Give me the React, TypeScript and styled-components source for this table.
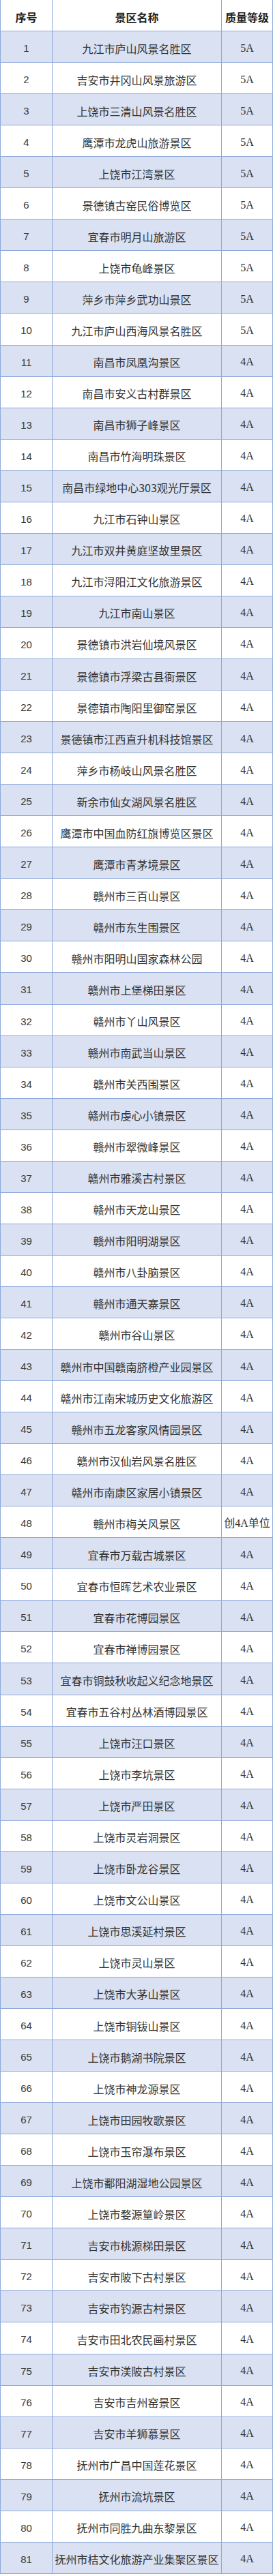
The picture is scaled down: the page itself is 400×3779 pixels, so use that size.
import React from "react";
import styled, { createGlobalStyle } from "styled-components";

const Global = createGlobalStyle`
  html, body { margin: 0; padding: 0; background: #ffffff; }
  body { font-family: "Noto Sans CJK SC", sans-serif; color: #333; }
`;

const LINE = "#8ea9db";

const Table = styled.div`
  width: 400px;
  display: flex;
  flex-direction: column;
`;

const Row = styled.div<{ $shaded?: boolean }>`
  display: grid;
  grid-template-columns: 76px 248px 76px;
  height: 46.06px;
  box-sizing: border-box;
  border-bottom: 1px solid ${LINE};
  background: ${(p) => (p.$shaded ? "#d9e1f2" : "#ffffff")};
`;

const Cell = styled.div<{ $last?: boolean }>`
  display: flex;
  align-items: center;
  justify-content: center;
  box-sizing: border-box;
  border-left: 1px solid ${LINE};
  ${(p) => (p.$last ? `border-right: 1px solid ${LINE};` : "")}
  padding-top: 4px;
  white-space: nowrap;
  overflow: hidden;
`;

const HeadText = styled.span`
  font-family: "Noto Sans CJK SC", sans-serif;
  font-weight: 700;
  font-size: 16px;
  color: #222;
  line-height: 1;
`;

const NumText = styled.span`
  font-family: "Liberation Sans", Arial, sans-serif;
  font-size: 15px;
  color: #3a3a3a;
  line-height: 1;
`;

const NameText = styled.span`
  font-family: "Noto Sans CJK SC", sans-serif;
  font-size: 16px;
  color: #333;
  line-height: 1;
`;

const GradeText = styled.span`
  font-family: "Liberation Serif", "Noto Sans CJK SC", serif;
  font-size: 16px;
  color: #333;
  line-height: 1;
`;

const rows: [string, string][] = [
  ["九江市庐山风景名胜区", "5A"],
  ["吉安市井冈山风景旅游区", "5A"],
  ["上饶市三清山风景名胜区", "5A"],
  ["鹰潭市龙虎山旅游景区", "5A"],
  ["上饶市江湾景区", "5A"],
  ["景德镇古窑民俗博览区", "5A"],
  ["宜春市明月山旅游区", "5A"],
  ["上饶市龟峰景区", "5A"],
  ["萍乡市萍乡武功山景区", "5A"],
  ["九江市庐山西海风景名胜区", "5A"],
  ["南昌市凤凰沟景区", "4A"],
  ["南昌市安义古村群景区", "4A"],
  ["南昌市狮子峰景区", "4A"],
  ["南昌市竹海明珠景区", "4A"],
  ["南昌市绿地中心303观光厅景区", "4A"],
  ["九江市石钟山景区", "4A"],
  ["九江市双井黄庭坚故里景区", "4A"],
  ["九江市浔阳江文化旅游景区", "4A"],
  ["九江市南山景区", "4A"],
  ["景德镇市洪岩仙境风景区", "4A"],
  ["景德镇市浮梁古县衙景区", "4A"],
  ["景德镇市陶阳里御窑景区", "4A"],
  ["景德镇市江西直升机科技馆景区", "4A"],
  ["萍乡市杨岐山风景名胜区", "4A"],
  ["新余市仙女湖风景名胜区", "4A"],
  ["鹰潭市中国血防红旗博览区景区", "4A"],
  ["鹰潭市青茅境景区", "4A"],
  ["赣州市三百山景区", "4A"],
  ["赣州市东生围景区", "4A"],
  ["赣州市阳明山国家森林公园", "4A"],
  ["赣州市上堡梯田景区", "4A"],
  ["赣州市丫山风景区", "4A"],
  ["赣州市南武当山景区", "4A"],
  ["赣州市关西围景区", "4A"],
  ["赣州市虔心小镇景区", "4A"],
  ["赣州市翠微峰景区", "4A"],
  ["赣州市雅溪古村景区", "4A"],
  ["赣州市天龙山景区", "4A"],
  ["赣州市阳明湖景区", "4A"],
  ["赣州市八卦脑景区", "4A"],
  ["赣州市通天寨景区", "4A"],
  ["赣州市谷山景区", "4A"],
  ["赣州市中国赣南脐橙产业园景区", "4A"],
  ["赣州市江南宋城历史文化旅游区", "4A"],
  ["赣州市五龙客家风情园景区", "4A"],
  ["赣州市汉仙岩风景名胜区", "4A"],
  ["赣州市南康区家居小镇景区", "4A"],
  ["赣州市梅关风景区", "创4A单位"],
  ["宜春市万载古城景区", "4A"],
  ["宜春市恒晖艺术农业景区", "4A"],
  ["宜春市花博园景区", "4A"],
  ["宜春市禅博园景区", "4A"],
  ["宜春市铜鼓秋收起义纪念地景区", "4A"],
  ["宜春市五谷村丛林酒博园景区", "4A"],
  ["上饶市汪口景区", "4A"],
  ["上饶市李坑景区", "4A"],
  ["上饶市严田景区", "4A"],
  ["上饶市灵岩洞景区", "4A"],
  ["上饶市卧龙谷景区", "4A"],
  ["上饶市文公山景区", "4A"],
  ["上饶市思溪延村景区", "4A"],
  ["上饶市灵山景区", "4A"],
  ["上饶市大茅山景区", "4A"],
  ["上饶市铜钹山景区", "4A"],
  ["上饶市鹅湖书院景区", "4A"],
  ["上饶市神龙源景区", "4A"],
  ["上饶市田园牧歌景区", "4A"],
  ["上饶市玉帘瀑布景区", "4A"],
  ["上饶市鄱阳湖湿地公园景区", "4A"],
  ["上饶市婺源篁岭景区", "4A"],
  ["吉安市桃源梯田景区", "4A"],
  ["吉安市陂下古村景区", "4A"],
  ["吉安市钓源古村景区", "4A"],
  ["吉安市田北农民画村景区", "4A"],
  ["吉安市渼陂古村景区", "4A"],
  ["吉安市吉州窑景区", "4A"],
  ["吉安市羊狮慕景区", "4A"],
  ["抚州市广昌中国莲花景区", "4A"],
  ["抚州市流坑景区", "4A"],
  ["抚州市同胜九曲东黎景区", "4A"],
  ["抚州市桔文化旅游产业集聚区景区", "4A"],
];

export default function App() {
  return (
    <>
      <Global />
      <Table>
        <Row>
          <Cell>
            <HeadText>序号</HeadText>
          </Cell>
          <Cell>
            <HeadText>景区名称</HeadText>
          </Cell>
          <Cell $last>
            <HeadText>质量等级</HeadText>
          </Cell>
        </Row>
        {rows.map(([name, grade], i) => (
          <Row key={i} $shaded={i % 2 === 0}>
            <Cell>
              <NumText>{i + 1}</NumText>
            </Cell>
            <Cell>
              <NameText>{name}</NameText>
            </Cell>
            <Cell $last>
              <GradeText>{grade}</GradeText>
            </Cell>
          </Row>
        ))}
      </Table>
    </>
  );
}
